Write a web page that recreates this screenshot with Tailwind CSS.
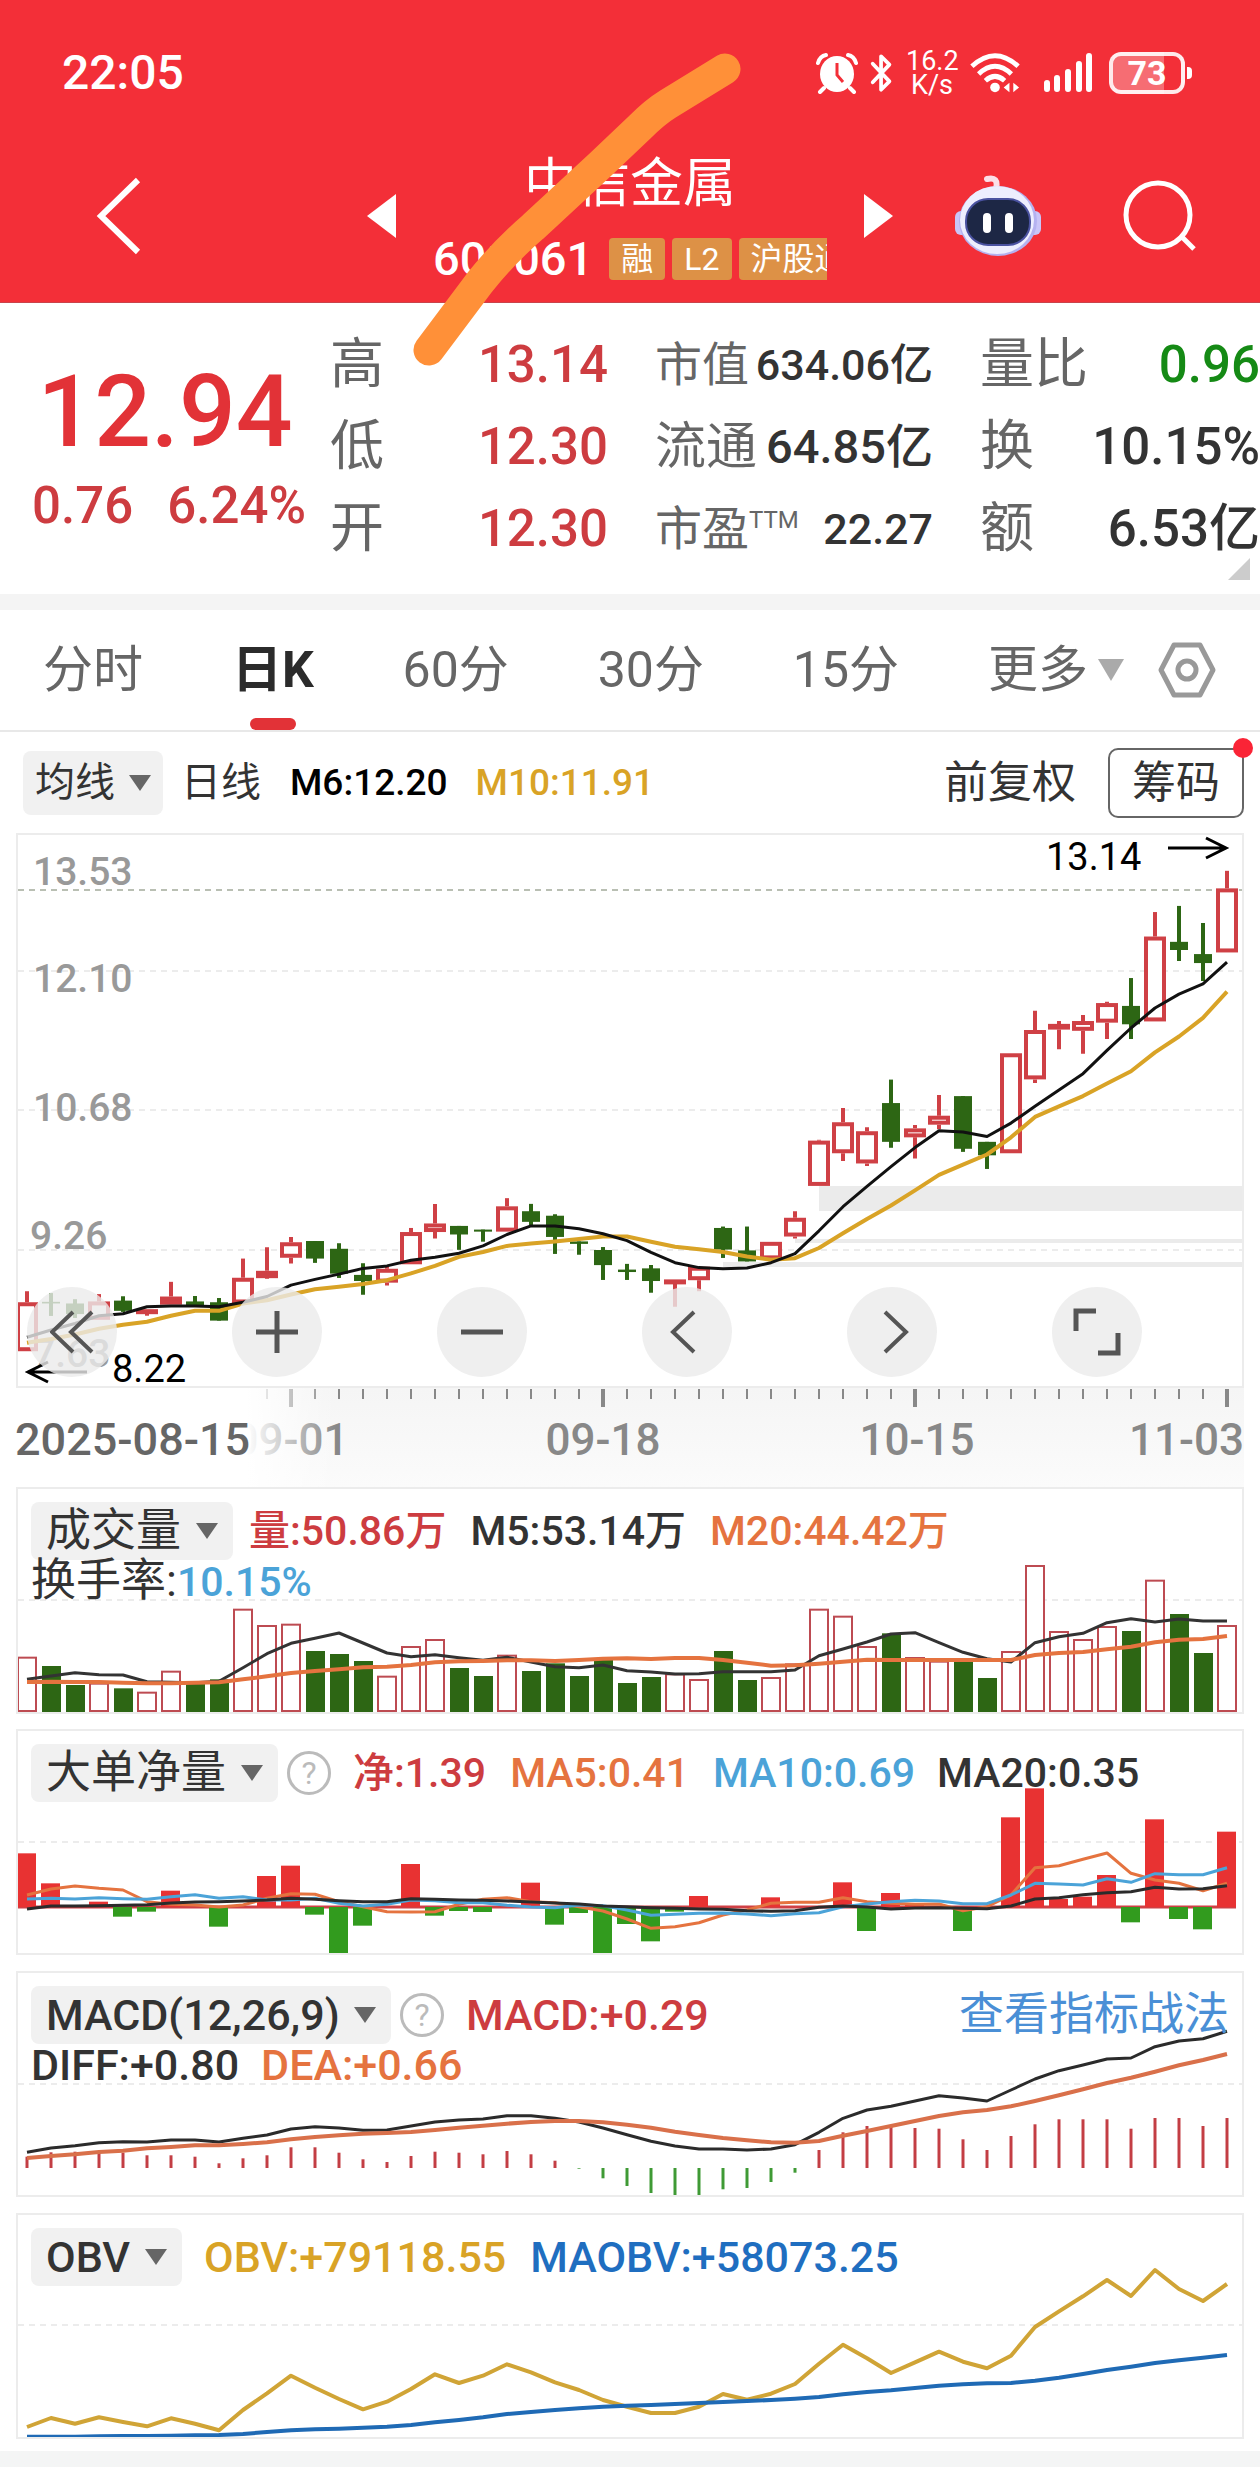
<!DOCTYPE html>
<html lang="zh-CN">
<head>
    <meta charset="UTF-8">
    <meta name="viewport" content="width=device-width, initial-scale=1.0">
    <title>中信金属 601061</title>
    <script src="https://cdn.jsdelivr.net/npm/@tailwindcss/browser@4"></script>
</head>
<body class="bg-white text-[#333] font-[Roboto,'Noto_Sans_CJK_SC',sans-serif]">
    <header class="relative bg-[#f32f38] text-white">
        <!-- Status bar -->
        <div class="flex items-center justify-between h-[146px] pl-[62px] pr-[68px]">
            <span class="text-[48px] leading-none font-medium">22:05</span>
            <div class="flex items-center gap-[11px]">
                <svg class="w-[42px] h-[42px]" viewBox="0 0 42 42" fill="none">
                    <ellipse cx="21" cy="22" rx="17" ry="18" fill="#fff"/>
                    <path d="M21 11v12l6 7" stroke="#f32f38" stroke-width="3"/>
                    <path d="M2 11Q4 4 10 3M40 11Q38 4 32 3M8 36l-4 4M34 36l4 4" stroke="#fff" stroke-width="4" stroke-linecap="round"/>
                </svg>
                <svg class="w-[26px] h-[42px]" viewBox="0 0 28 42" fill="none" stroke="#fff" stroke-width="4" stroke-linejoin="round" stroke-linecap="round">
                    <path d="M4 11l18 19-9 9V3l9 9L4 31"/>
                </svg>
                <div class="text-[27px] leading-[24px] text-center w-[52px]">16.2<br>K/s</div>
                <svg class="w-[52px] h-[42px]" viewBox="0 0 54 42" fill="none" stroke="#fff" stroke-width="5">
                    <path d="M3 14Q27-8 51 14M10 22Q27 6 44 22M17 29Q27 20 37 29"/>
                    <circle cx="27" cy="36" r="5" fill="#fff" stroke="none"/>
                    <path d="M42 31l-6 5 6 5zM46 31l6 5-6 5z" fill="#fff" stroke="none"/>
                </svg>
                <svg class="w-[52px] h-[42px] ml-[10px]" viewBox="0 0 52 42" stroke="#fff" stroke-width="6" stroke-linecap="round">
                    <path d="M5 31v6M15 26v11M26 20v17M37 12v25M47 4v33"/>
                </svg>
                <div class="flex items-center ml-[4px]">
                    <div class="flex items-center justify-center w-[76px] h-[42px] rounded-[12px] border-4 border-white/90 bg-linear-to-r from-white/30 from-75% to-transparent to-75% text-[34px] leading-none font-bold">73</div>
                    <div class="w-[5px] h-[12px] ml-[2px] rounded-r bg-white"></div>
                </div>
            </div>
        </div>

        <!-- Title bar -->
        <div class="grid grid-cols-[320fr_620fr_320fr] items-center h-[156px] pb-[18px]">
            <button class="justify-self-start ml-[92px] mb-[10px]" aria-label="返回">
                <svg class="w-[52px] h-[80px]" viewBox="0 0 52 80" fill="none" stroke="#fff" stroke-width="6"><path d="M46 4L9 40l37 36"/></svg>
            </button>
            <div class="flex items-center justify-between px-[46px]">
                <button class="mb-[10px]" aria-label="上一只"><svg class="w-[30px] h-[44px]" viewBox="0 0 30 44" fill="#fff"><path d="M30 0v44L1 22z"/></svg></button>
                <div class="flex flex-col items-center w-[394px]">
                    <h1 class="text-[53px] leading-[76px]">中信金属</h1>
                    <div class="flex items-center gap-[7px] w-full leading-[74px] overflow-hidden">
                        <span class="text-[47px] font-medium mr-[9px]">601061</span>
                        <span class="px-[12px] rounded bg-[#dd9146] text-[32px] leading-[42px]">融</span>
                        <span class="px-[12px] rounded bg-[#dd9146] text-[32px] leading-[42px]">L2</span>
                        <span class="px-[12px] rounded bg-[#dd9146] text-[32px] leading-[42px] whitespace-nowrap">沪股通</span>
                    </div>
                </div>
                <button class="mb-[10px]" aria-label="下一只"><svg class="w-[30px] h-[44px]" viewBox="0 0 30 44" fill="#fff"><path d="M0 0v44l29-22z"/></svg></button>
            </div>
            <div class="flex items-center justify-end gap-[80px] pr-[64px] mb-[10px]">
                <button aria-label="智能助手">
                    <svg class="w-[88px] h-[82px]" viewBox="0 0 88 82">
                        <path d="M42 14Q45 1 33 4" fill="none" stroke="#fbdfe8" stroke-width="6" stroke-linecap="round"/>
                        <rect x="1" y="36" width="14" height="24" rx="6" fill="#c9c5f8"/>
                        <rect x="73" y="36" width="14" height="24" rx="6" fill="#c9c5f8"/>
                        <ellipse cx="44" cy="46" rx="39" ry="35" fill="#b5b2f0"/>
                        <ellipse cx="43" cy="45" rx="37" ry="34" fill="#edeefe"/>
                        <rect x="12" y="24" width="64" height="46" rx="22" fill="#1d2745" stroke="#4a52a0" stroke-width="2"/>
                        <path d="M33 42v12M55 42v12" stroke="#fff" stroke-width="8" stroke-linecap="round"/>
                    </svg>
                </button>
                <button aria-label="搜索">
                    <svg class="w-[74px] h-[74px]" viewBox="0 0 74 74" fill="none" stroke="#fff" stroke-width="5"><circle cx="36" cy="36" r="32"/><path d="M60 58l12 12"/></svg>
                </button>
            </div>
        </div>

        <!-- Marker stroke -->
        <svg class="absolute inset-x-0 top-0 w-full pointer-events-none z-10" viewBox="0 0 1260 380" fill="none">
            <path d="M725 69L668 104Q655 112 640 127L600 165L533 227Q505 251 480 282L429 350" stroke="#ff9038" stroke-width="31" stroke-linecap="round" stroke-linejoin="round"/>
        </svg>
    </header>

    <!-- Quote -->
    <section class="relative grid grid-cols-[330fr_278fr_47fr_278fr_47fr_280fr] h-[292px] pt-[21px] leading-[82px] text-[51px] font-medium border-t border-[#c9444b]">
        <div class="text-center text-[#e23237]">
            <div class="text-[100px] leading-[100px] pt-[38px]">12.94</div>
            <div class="flex justify-between pl-[32px] pr-[24px] leading-[88px] text-[#cd3c40]"><span>0.76</span><span>6.24%</span></div>
        </div>
        <dl class="text-[#cd3c40]">
            <div class="flex justify-between"><dt class="text-[54px] font-normal text-[#666]">高</dt><dd>13.14</dd></div>
            <div class="flex justify-between"><dt class="text-[54px] font-normal text-[#666]">低</dt><dd>12.30</dd></div>
            <div class="flex justify-between"><dt class="text-[54px] font-normal text-[#666]">开</dt><dd>12.30</dd></div>
        </dl>
        <dl class="col-start-4 whitespace-nowrap">
            <div class="flex justify-between"><dt class="text-[47px] font-normal text-[#666]">市值</dt><dd class="text-[43px]">634.06亿</dd></div>
            <div class="flex justify-between"><dt class="text-[51px] font-normal text-[#666]">流通</dt><dd class="text-[47px]">64.85亿</dd></div>
            <div class="flex justify-between"><dt class="flex text-[47px] font-normal text-[#666]">市盈<span class="text-[24px] leading-[64px]">TTM</span></dt><dd class="text-[43px]">22.27</dd></div>
        </dl>
        <dl class="col-start-6 whitespace-nowrap">
            <div class="flex justify-between"><dt class="text-[54px] font-normal text-[#666]">量比</dt><dd class="text-[#158a15]">0.96</dd></div>
            <div class="flex justify-between"><dt class="text-[54px] font-normal text-[#666]">换</dt><dd>10.15%</dd></div>
            <div class="flex justify-between"><dt class="text-[54px] font-normal text-[#666]">额</dt><dd>6.53亿</dd></div>
        </dl>
        <svg class="absolute right-[10px] bottom-[14px] w-[22px] h-[22px]" viewBox="0 0 22 22" fill="#ccc"><path d="M22 0v22H0z"/></svg>
    </section>
    <div class="h-[16px] bg-[#f4f4f4]"></div>

    <!-- Period tabs -->
    <nav class="flex items-center h-[122px] pl-[43px] pr-[44px] text-[50px] text-[#666] border-b-2 border-[#e8e8e8]">
        <div class="flex grow justify-between items-center h-full">
            <button>分时</button>
            <button class="relative h-full font-bold text-[#2b2b2b]">日K<span class="absolute left-1/2 -translate-x-1/2 bottom-0 w-[46px] h-[12px] rounded-full bg-[#e23237]"></span></button>
            <button>60分</button>
            <button>30分</button>
            <button>15分</button>
            <label class="flex items-center gap-[10px]">
                <select class="appearance-none" aria-label="更多周期"><option>更多</option></select>
                <svg class="w-[26px] h-[22px]" viewBox="0 0 26 22" fill="#aaa"><path d="M0 0h26L13 22z"/></svg>
            </label>
        </div>
        <button class="ml-[34px]" aria-label="设置">
            <svg class="w-[58px] h-[56px]" viewBox="0 0 58 56" fill="none" stroke="#999" stroke-width="5" stroke-linejoin="round"><path d="M16 3h26l13 25-13 25H16L3 28z"/><circle cx="29" cy="28" r="9"/></svg>
        </button>
    </nav>

    <!-- Moving average row -->
    <div class="flex items-center h-[101px] pl-[23px] pr-[16px] text-[37px] font-medium">
        <label class="flex items-center gap-[14px] h-[64px] px-[12px] rounded-lg bg-[#f1f1f1]">
            <select class="appearance-none text-[40px] font-normal" aria-label="主图指标"><option>均线</option></select>
            <svg class="w-[22px] h-[16px]" viewBox="0 0 22 16" fill="#666"><path d="M0 0h22L11 16z"/></svg>
        </label>
        <span class="ml-[18px] text-[40px] font-normal">日线</span>
        <span class="ml-[29px] text-black">M6:12.20</span>
        <span class="ml-[28px] text-[#d9a326]">M10:11.91</span>
        <button class="ml-auto text-[44px] font-normal">前复权</button>
        <button class="relative w-[136px] h-[70px] ml-[32px] rounded-[10px] border-2 border-[#666] text-[44px] leading-none font-normal">筹码<span class="absolute -top-[12px] -right-[11px] w-[20px] h-[20px] rounded-full bg-[#fa2436]"></span></button>
    </div>

    <main class="px-[16px]">
        <!-- Candles -->
        <section class="relative border-2 border-[#ececec]">
            <svg id="kline" class="block w-full" viewBox="18 5 1224 551"></svg>
            <div class="absolute inset-x-0 bottom-[9px] flex gap-[115px] pl-[9px]">
                <button class="flex items-center justify-center w-[90px] h-[90px] rounded-full bg-[#ebebeb]/80" aria-label="最早">
                    <svg class="w-[44px] h-[44px]" viewBox="0 0 44 44" fill="none" stroke="#555" stroke-width="4"><path d="M23 2L2 22l21 20M42 2L21 22l21 20"/></svg>
                </button>
                <button class="flex items-center justify-center w-[90px] h-[90px] rounded-full bg-[#ebebeb]/80" aria-label="放大">
                    <svg class="w-[44px] h-[44px]" viewBox="0 0 44 44" fill="none" stroke="#555" stroke-width="5"><path d="M22 1v42M1 22h42"/></svg>
                </button>
                <button class="flex items-center justify-center w-[90px] h-[90px] rounded-full bg-[#ebebeb]/80" aria-label="缩小">
                    <svg class="w-[44px] h-[44px]" viewBox="0 0 44 44" fill="none" stroke="#555" stroke-width="5"><path d="M1 22h42"/></svg>
                </button>
                <button class="flex items-center justify-center w-[90px] h-[90px] rounded-full bg-[#ebebeb]/80" aria-label="左移">
                    <svg class="w-[44px] h-[44px]" viewBox="0 0 44 44" fill="none" stroke="#555" stroke-width="4"><path d="M29 2L8 22l21 20"/></svg>
                </button>
                <button class="flex items-center justify-center w-[90px] h-[90px] rounded-full bg-[#ebebeb]/80" aria-label="右移">
                    <svg class="w-[44px] h-[44px]" viewBox="0 0 44 44" fill="none" stroke="#555" stroke-width="4"><path d="M15 2l21 20-21 20"/></svg>
                </button>
                <button class="flex items-center justify-center w-[90px] h-[90px] rounded-full bg-[#ebebeb]/80" aria-label="全屏">
                    <svg class="w-[48px] h-[48px]" viewBox="0 0 48 48" fill="none" stroke="#555" stroke-width="5"><path d="M3 23V3h20M45 25v20H25"/></svg>
                </button>
            </div>
        </section>

        <!-- Date axis -->
        <svg id="axis" class="block w-full bg-linear-to-b from-[#f5f5f5] to-[#fbfbfb]" viewBox="16 0 1228 99"></svg>

        <!-- Volume -->
        <section class="relative border-2 border-[#ececec]">
            <svg id="volume" class="block w-full" viewBox="18 19 1224 223"></svg>
            <div class="absolute inset-x-0 top-0 px-[13px] pt-[13px] text-[41px] leading-[58px] font-medium whitespace-nowrap">
                <div class="flex items-center">
                    <label class="flex items-center gap-[14px] h-[58px] px-[15px] rounded-lg bg-[#f1f1f1]">
                        <select class="appearance-none text-[45px] leading-[58px] font-normal" aria-label="副图指标"><option>成交量</option></select>
                        <svg class="w-[22px] h-[16px]" viewBox="0 0 22 16" fill="#666"><path d="M0 0h22L11 16z"/></svg>
                    </label>
                    <span class="ml-[16px] text-[#cd3c40]">量:50.86万</span>
                    <span class="ml-[24px]">M5:53.14万</span>
                    <span class="ml-[24px] text-[#e5733f]">M20:44.42万</span>
                </div>
                <div class="leading-[42px]"><span class="text-[45px] font-normal">换手率:</span><span class="text-[#4ba3d8]">10.15%</span></div>
            </div>
        </section>

        <!-- Net large orders -->
        <section class="relative mt-[15px] border-2 border-[#ececec]">
            <svg id="netflow" class="block w-full" viewBox="18 11 1224 222"></svg>
            <div class="absolute inset-x-0 top-0 flex items-center px-[13px] pt-[13px] text-[41px] leading-[58px] font-medium whitespace-nowrap">
                <label class="flex items-center gap-[14px] h-[58px] px-[15px] rounded-lg bg-[#f1f1f1]">
                    <select class="appearance-none text-[45px] leading-[58px] font-normal" aria-label="副图指标"><option>大单净量</option></select>
                    <svg class="w-[22px] h-[16px]" viewBox="0 0 22 16" fill="#666"><path d="M0 0h22L11 16z"/></svg>
                </label>
                <button class="w-[44px] h-[44px] ml-[9px] rounded-full border-3 border-[#bbb] text-[32px] leading-[38px] font-normal text-[#bbb]" aria-label="说明">?</button>
                <span class="ml-[22px] text-[#cd3c40]">净:1.39</span>
                <span class="ml-[24px] text-[#e5733f]">MA5:0.41</span>
                <span class="ml-[24px] text-[#4ba3d8]">MA10:0.69</span>
                <span class="ml-[22px]">MA20:0.35</span>
            </div>
        </section>

        <!-- MACD -->
        <section class="relative mt-[16px] border-2 border-[#ececec]">
            <svg id="macd" class="block w-full" viewBox="18 13 1224 222"></svg>
            <div class="absolute inset-x-0 top-0 px-[13px] pt-[13px] text-[43px] leading-[58px] font-medium whitespace-nowrap">
                <div class="flex items-center">
                    <label class="flex items-center gap-[14px] h-[58px] px-[15px] rounded-lg bg-[#f1f1f1]">
                        <select class="appearance-none leading-[58px]" aria-label="副图指标"><option>MACD(12,26,9)</option></select>
                        <svg class="w-[22px] h-[16px]" viewBox="0 0 22 16" fill="#666"><path d="M0 0h22L11 16z"/></svg>
                    </label>
                    <button class="w-[44px] h-[44px] ml-[9px] rounded-full border-3 border-[#bbb] text-[32px] leading-[38px] font-normal text-[#bbb]" aria-label="说明">?</button>
                    <span class="ml-[22px] text-[#cd3c40]">MACD:+0.29</span>
                    <a href="#" class="ml-auto text-[45px] font-normal text-[#4a8fd6]">查看指标战法</a>
                </div>
                <div class="leading-[42px]"><span>DIFF:+0.80</span><span class="ml-[22px] text-[#e5733f]">DEA:+0.66</span></div>
            </div>
        </section>

        <!-- OBV -->
        <section class="relative mt-[16px] border-2 border-[#ececec]">
            <svg id="obv" class="block w-full" viewBox="18 256 1224 222"></svg>
            <div class="absolute inset-x-0 top-0 flex items-center px-[13px] pt-[13px] text-[43px] leading-[58px] font-medium whitespace-nowrap">
                <label class="flex items-center gap-[14px] h-[58px] px-[15px] rounded-lg bg-[#f1f1f1]">
                    <select class="appearance-none leading-[58px]" aria-label="副图指标"><option>OBV</option></select>
                    <svg class="w-[22px] h-[16px]" viewBox="0 0 22 16" fill="#666"><path d="M0 0h22L11 16z"/></svg>
                </label>
                <span class="ml-[22px] text-[#d9a326]">OBV:+79118.55</span>
                <span class="ml-[24px] text-[#1f6ec0]">MAOBV:+58073.25</span>
            </div>
        </section>
    </main>
    <footer class="h-[16px] mt-[12px] mb-[3px] bg-[#f4f5f5]"></footer>

    <script>
        const RED = '#cf4045', GREEN = '#2d6614';
        const x = i => 27 + i * 24;

        // [direction, body top, body bottom, high, low]
        const candles = [
            ['r',1157,1277,1130,1277],['g',1156,1160,1135,1190],['g',1160,1186,1150,1195],['r',1155,1200,1137,1200],['g',1153,1178,1143,1180],
            ['r',1174,1184,1174,1190],['r',1143,1163,1107,1163],['g',1155,1165,1142,1165],['g',1157,1202,1147,1202],['r',1097,1160,1050,1160],
            ['r',1080,1098,1022,1100],['r',1010,1048,997,1062],['g',1007,1050,1007,1060],['g',1026,1087,1013,1097],['g',1090,1105,1062,1138],
            ['r',1075,1109,1070,1116],['r',985,1064,975,1064],['r',964,985,916,1001],['g',970,991,970,1028],['g',979,984,979,1008],
            ['r',922,984,902,984],['g',934,960,916,972],['g',945,997,942,1038],['g',1008,1014,1008,1040],['g',1029,1066,1022,1102],
            ['g',1077,1083,1063,1102],['g',1074,1105,1066,1133],['r',1101,1109,1101,1168],['r',1070,1103,1070,1130],['g',975,1028,972,1048],
            ['g',1030,1057,972,1057],['r',1009,1052,1009,1052],['r',950,996,934,1001],['r',761,872,759,872],['r',716,792,681,811],
            ['r',738,817,728,823],['g',669,764,612,778],['r',731,753,723,805],['r',700,722,649,733],['g',652,781,652,788],
            ['g',764,797,764,830],['r',547,792,547,792],['r',490,611,443,620],['r',475,489,468,537],['r',468,492,453,548],
            ['r',424,472,421,512],['g',431,476,363,512],['r',261,469,201,469],['g',274,294,186,321],['g',304,326,228,370],['r',143,300,100,300]
        ];
        const ma6 = [1243,1225,1209,1190,1185,1168,1166,1166,1168,1157,1143,1115,1101,1088,1074,1068,1054,1047,1037,1019,991,970,970,977,989,1006,1035,1060,1072,1075,1073,1060,1038,982,923,873,825,778,737,740,751,718,677,637,597,540,485,436,402,377,324];
        const ma10 = [1256,1247,1236,1222,1212,1205,1190,1178,1178,1160,1152,1138,1125,1119,1112,1103,1086,1068,1046,1034,1019,1013,1008,1002,996,996,1009,1021,1027,1034,1045,1053,1049,1024,988,953,920,883,845,820,795,753,703,677,652,621,591,545,506,460,396];

        const vol = [560,588,645,638,655,665,602,640,628,416,465,461,543,552,573,617,528,507,594,618,554,603,580,618,570,639,621,610,627,543,630,621,580,416,437,528,490,561,572,576,624,543,285,483,507,468,483,329,432,549,465];
        const volM5 = [628,618,608,614,615,635,637,638,634,593,551,520,505,489,519,549,560,554,563,571,562,576,590,593,585,602,606,612,611,605,605,605,600,557,537,516,492,488,518,547,566,576,518,500,490,458,446,456,447,453,453];
        const volM20 = [636,635,636,636,638,640,640,638,637,628,619,609,603,598,592,590,585,577,574,573,571,571,573,570,566,565,567,564,564,570,578,587,586,581,575,569,570,570,570,570,570,570,555,549,546,538,530,517,509,507,498];

        const net = [400,490,561,545,590,575,512,561,620,561,468,437,584,705,617,561,432,587,573,576,561,488,614,579,701,612,664,575,528,561,561,532,561,561,487,633,519,552,561,633,561,292,205,537,530,465,607,298,597,628,335];
        const netM5 = [525,507,498,505,510,545,553,555,561,555,535,521,523,545,560,575,576,575,553,538,533,545,548,560,573,597,625,620,608,585,570,550,547,547,533,545,550,553,552,572,560,525,443,437,418,399,460,480,490,512,490];
        const netM10 = [537,535,537,533,536,538,530,524,535,530,540,540,535,550,558,553,540,542,548,548,556,561,563,555,557,570,586,583,580,579,582,587,581,578,560,552,545,541,543,551,551,525,490,492,495,476,487,461,464,464,443];
        const netM20 = [567,558,558,557,556,554,549,546,545,543,540,535,538,542,545,545,536,538,540,541,543,546,549,552,558,560,563,565,567,568,572,574,572,562,558,561,567,564,563,565,566,558,537,533,524,518,515,502,507,506,497];

        const bars = [590,577,575,575,578,586,586,590,610,595,586,562,562,578,598,606,588,575,578,583,573,583,602,626,655,678,699,711,706,688,684,666,638,570,517,498,500,504,506,538,570,528,493,478,478,478,506,474,474,498,474];
        const diff = [577,564,557,548,545,546,540,540,546,535,525,507,500,504,511,510,498,486,480,477,467,467,475,486,504,524,544,558,567,567,570,567,554,517,475,450,439,423,407,414,423,390,357,332,315,297,294,260,243,236,214];
        const dea = [594,588,583,576,572,565,561,556,556,552,547,538,531,526,521,519,516,510,503,497,491,486,483,483,487,494,503,515,525,534,541,547,548,543,527,513,498,483,468,457,450,439,423,406,388,369,353,335,316,300,282];

        const obv = [1404,1377,1394,1375,1389,1402,1378,1394,1414,1353,1303,1250,1286,1320,1351,1328,1290,1246,1272,1250,1216,1240,1270,1293,1323,1343,1362,1362,1343,1305,1322,1304,1275,1214,1157,1198,1242,1210,1178,1208,1228,1190,1104,1057,1012,963,1011,933,990,1026,975];
        const maobv = [1433,1433,1433,1432,1431,1431,1430,1429,1428,1425,1419,1414,1411,1409,1406,1403,1398,1390,1383,1375,1365,1359,1353,1348,1343,1340,1338,1335,1332,1329,1326,1323,1319,1314,1306,1299,1294,1287,1280,1276,1273,1272,1265,1256,1245,1233,1223,1212,1204,1196,1188];

        function line(data, color, scale, width = 4) {
            const points = data.map((v, i) => `${x(i)},${(v / scale).toFixed(1)}`).join(' ');
            return `<polyline points="${points}" fill="none" stroke="${color}" stroke-width="${width}" stroke-linejoin="round"/>`;
        }

        function grid(y, color = '#e6e6e6', dash = '6 5') {
            return `<path d="M18 ${y}H1242" stroke="${color}" stroke-width="1.5" stroke-dasharray="${dash}"/>`;
        }

        function label(tx, ty, text, color, size, weight = 500, anchor = 'start') {
            return `<text x="${tx}" y="${ty}" fill="${color}" font-size="${size}" font-weight="${weight}" text-anchor="${anchor}">${text}</text>`;
        }

        // Candlestick chart
        function drawKline() {
            let s = `<path d="M819 356H1242V381H819zM795 409H1242V413H795zM723 432H1242V437H723z" fill="#ebebeb"/>`;
            s += grid(60, '#a3aa9a', '6 5') + grid(141) + grid(280) + grid(420);
            s += label(33, 55, '13.53', '#999', 39) + label(33, 162, '12.10', '#999', 39) + label(33, 291, '10.68', '#999', 39)
               + label(30, 419, '9.26', '#999', 39) + label(33, 537, '7.63', '#999', 39);
            candles.forEach(([dir, top, bottom, high, low], i) => {
                const [t, b, h, l] = [top, bottom, high, low].map(v => v / 2.45);
                const color = dir === 'r' ? RED : GREEN;
                s += `<path d="M${x(i)} ${h}V${t}M${x(i)} ${b}V${l}" stroke="${color}" stroke-width="4"/>`;
                if (dir === 'g') {
                    s += `<path d="M${x(i)} ${h}V${l}" stroke="${color}" stroke-width="4"/>`;
                    s += `<rect x="${x(i) - 9}" y="${t}" width="18" height="${b - t}" fill="${color}"/>`;
                } else {
                    const inner = Math.max(b - t - 4, 1);
                    s += `<rect x="${x(i) - 9}" y="${t + 2}" width="18" height="${inner}" fill="${i === 6 || i === 10 || i === 43 ? color : '#fff'}" stroke="${color}" stroke-width="4"/>`;
                }
            });
            s += line(ma10, '#d9a326', 2.45) + line(ma6, '#111', 2.45, 3);
            s += label(112, 552, '8.22', '#000', 38, 400) + label(1046, 40, '13.14', '#000', 38, 400);
            s += `<path d="M87 542H28M48 532L28 542l20 10M1168 18H1226M1206 8l20 10-20 10" fill="none" stroke="#000" stroke-width="3"/>`;
            document.getElementById('kline').innerHTML = s;
        }

        function drawAxis() {
            let s = `<defs><linearGradient id="fade"><stop offset="0.72" stop-color="#fff"/><stop offset="1" stop-color="#fff" stop-opacity="0"/></linearGradient></defs>`;
            for (let i = 9; i <= 50; i++) {
                const major = (i - 11) % 13 === 0;
                s += `<path d="M${x(i)} 1v${major ? 18 : 10}" stroke="#888" stroke-width="${major ? 4 : 2}"/>`;
            }
            s += label(291, 67, '09-01', '#888', 44, 500, 'middle') + label(603, 67, '09-18', '#888', 44, 500, 'middle');
            s += label(917, 67, '10-15', '#888', 44, 500, 'middle') + label(1244, 67, '11-03', '#888', 44, 500, 'end');
            s += `<rect x="16" y="0" width="320" height="99" fill="url(#fade)"/>` + label(15, 67, '2025-08-15', '#666', 45);
            document.getElementById('axis').innerHTML = s;
        }

        function drawVolume() {
            let s = grid(130);
            vol.forEach((v, i) => {
                const top = v / 3;
                s += candles[i][0] === 'g'
                    ? `<rect x="${x(i) - 9}" y="${top}" width="19" height="${244 - top}" fill="${GREEN}"/>`
                    : `<rect x="${x(i) - 9}" y="${top + 1}" width="18" height="${240 - top}" fill="#fff" stroke="#bd4b52" stroke-width="2"/>`;
            });
            document.getElementById('volume').innerHTML = s + line(volM5, '#333', 3, 3) + line(volM20, '#e5733f', 3);
        }

        function drawNetflow() {
            let s = grid(122) + `<path d="M18 187H1236" stroke="#cf4045" stroke-width="3"/>`;
            net.forEach((v, i) => {
                const y = v / 3;
                s += `<rect x="${x(i) - 10}" y="${Math.min(y, 187)}" width="19" height="${Math.abs(y - 187)}" fill="${y < 187 ? '#e83232' : '#329b1e'}"/>`;
            });
            document.getElementById('netflow').innerHTML = s + line(netM5, '#e5733f', 3, 3) + line(netM10, '#4ba3d8', 3, 3) + line(netM20, '#2b2b2b', 3, 3);
        }

        function drawMacd() {
            let s = grid(124);
            bars.forEach((v, i) => {
                s += `<path d="M${x(i)} 208V${(v / 3).toFixed(1)}" stroke="${v < 624 ? '#c33e44' : '#3f9a35'}" stroke-width="3"/>`;
            });
            document.getElementById('macd').innerHTML = s + line(diff, '#2b2b2b', 3, 3) + line(dea, '#d9704a', 3);
        }

        function drawObv() {
            document.getElementById('obv').innerHTML = grid(366) + line(obv, '#d0a436', 3) + line(maobv, '#1f6ab5', 3);
        }

        drawKline();
        drawAxis();
        drawVolume();
        drawNetflow();
        drawMacd();
        drawObv();
    </script>
</body>
</html>
